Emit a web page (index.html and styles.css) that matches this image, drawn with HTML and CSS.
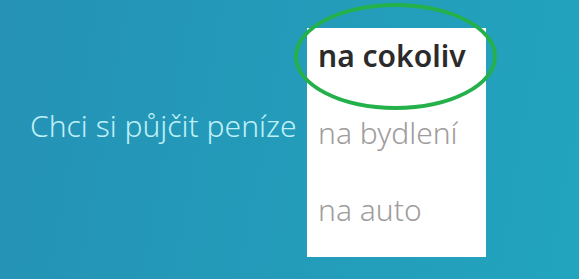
FILE: index.html
```html
<!DOCTYPE html>
<html lang="cs">
<head>
<meta charset="utf-8">
<link rel="stylesheet" href="styles.css">
</head>
<body>
<main class="hero">
  <p class="lead">Chci si půjčit peníze</p>
  <div class="picker">
    <ul class="menu">
      <li class="item active">na cokoliv</li>
      <li class="item">na bydlení</li>
      <li class="item">na auto</li>
    </ul>
    <span class="ring"></span>
  </div>
</main>
</body>
</html>
```
FILE: styles.css
```css
html, body {
  margin: 0;
  padding: 0;
}
body {
  width: 579px;
  height: 279px;
  overflow: hidden;
  background: linear-gradient(100deg, #2592b5 0%, #239cba 55%, #22a4be 100%);
  font-family: "Noto Sans", "DejaVu Sans", sans-serif;
}
.hero {
  display: flex;
  align-items: flex-start;
  padding: 28px 0 0 30px;
  height: 279px;
  box-sizing: border-box;
}
.lead {
  margin: 78px 0 0 0;
  font-size: 30px;
  line-height: 40px;
  font-weight: 300;
  color: #bff0f7;
  white-space: nowrap;
  width: 277px;
}
.picker {
  position: relative;
}
.menu {
  list-style: none;
  margin: 0;
  padding: 3px 0 22px 11px;
  width: 179px;
  box-sizing: border-box;
  background: #fff;
}
.item {
  font-size: 30px;
  line-height: 50px;
  font-weight: 300;
  color: #a09c9c;
  white-space: nowrap;
}
.item + .item {
  margin-top: 27px;
}
.item.active {
  font-weight: 600;
  color: #2b2b2b;
}
.ring {
  position: absolute;
  left: -13px;
  top: -25px;
  width: 203px;
  height: 107px;
  box-sizing: border-box;
  border: 4px solid #24b04b;
  border-radius: 50%;
}
```
